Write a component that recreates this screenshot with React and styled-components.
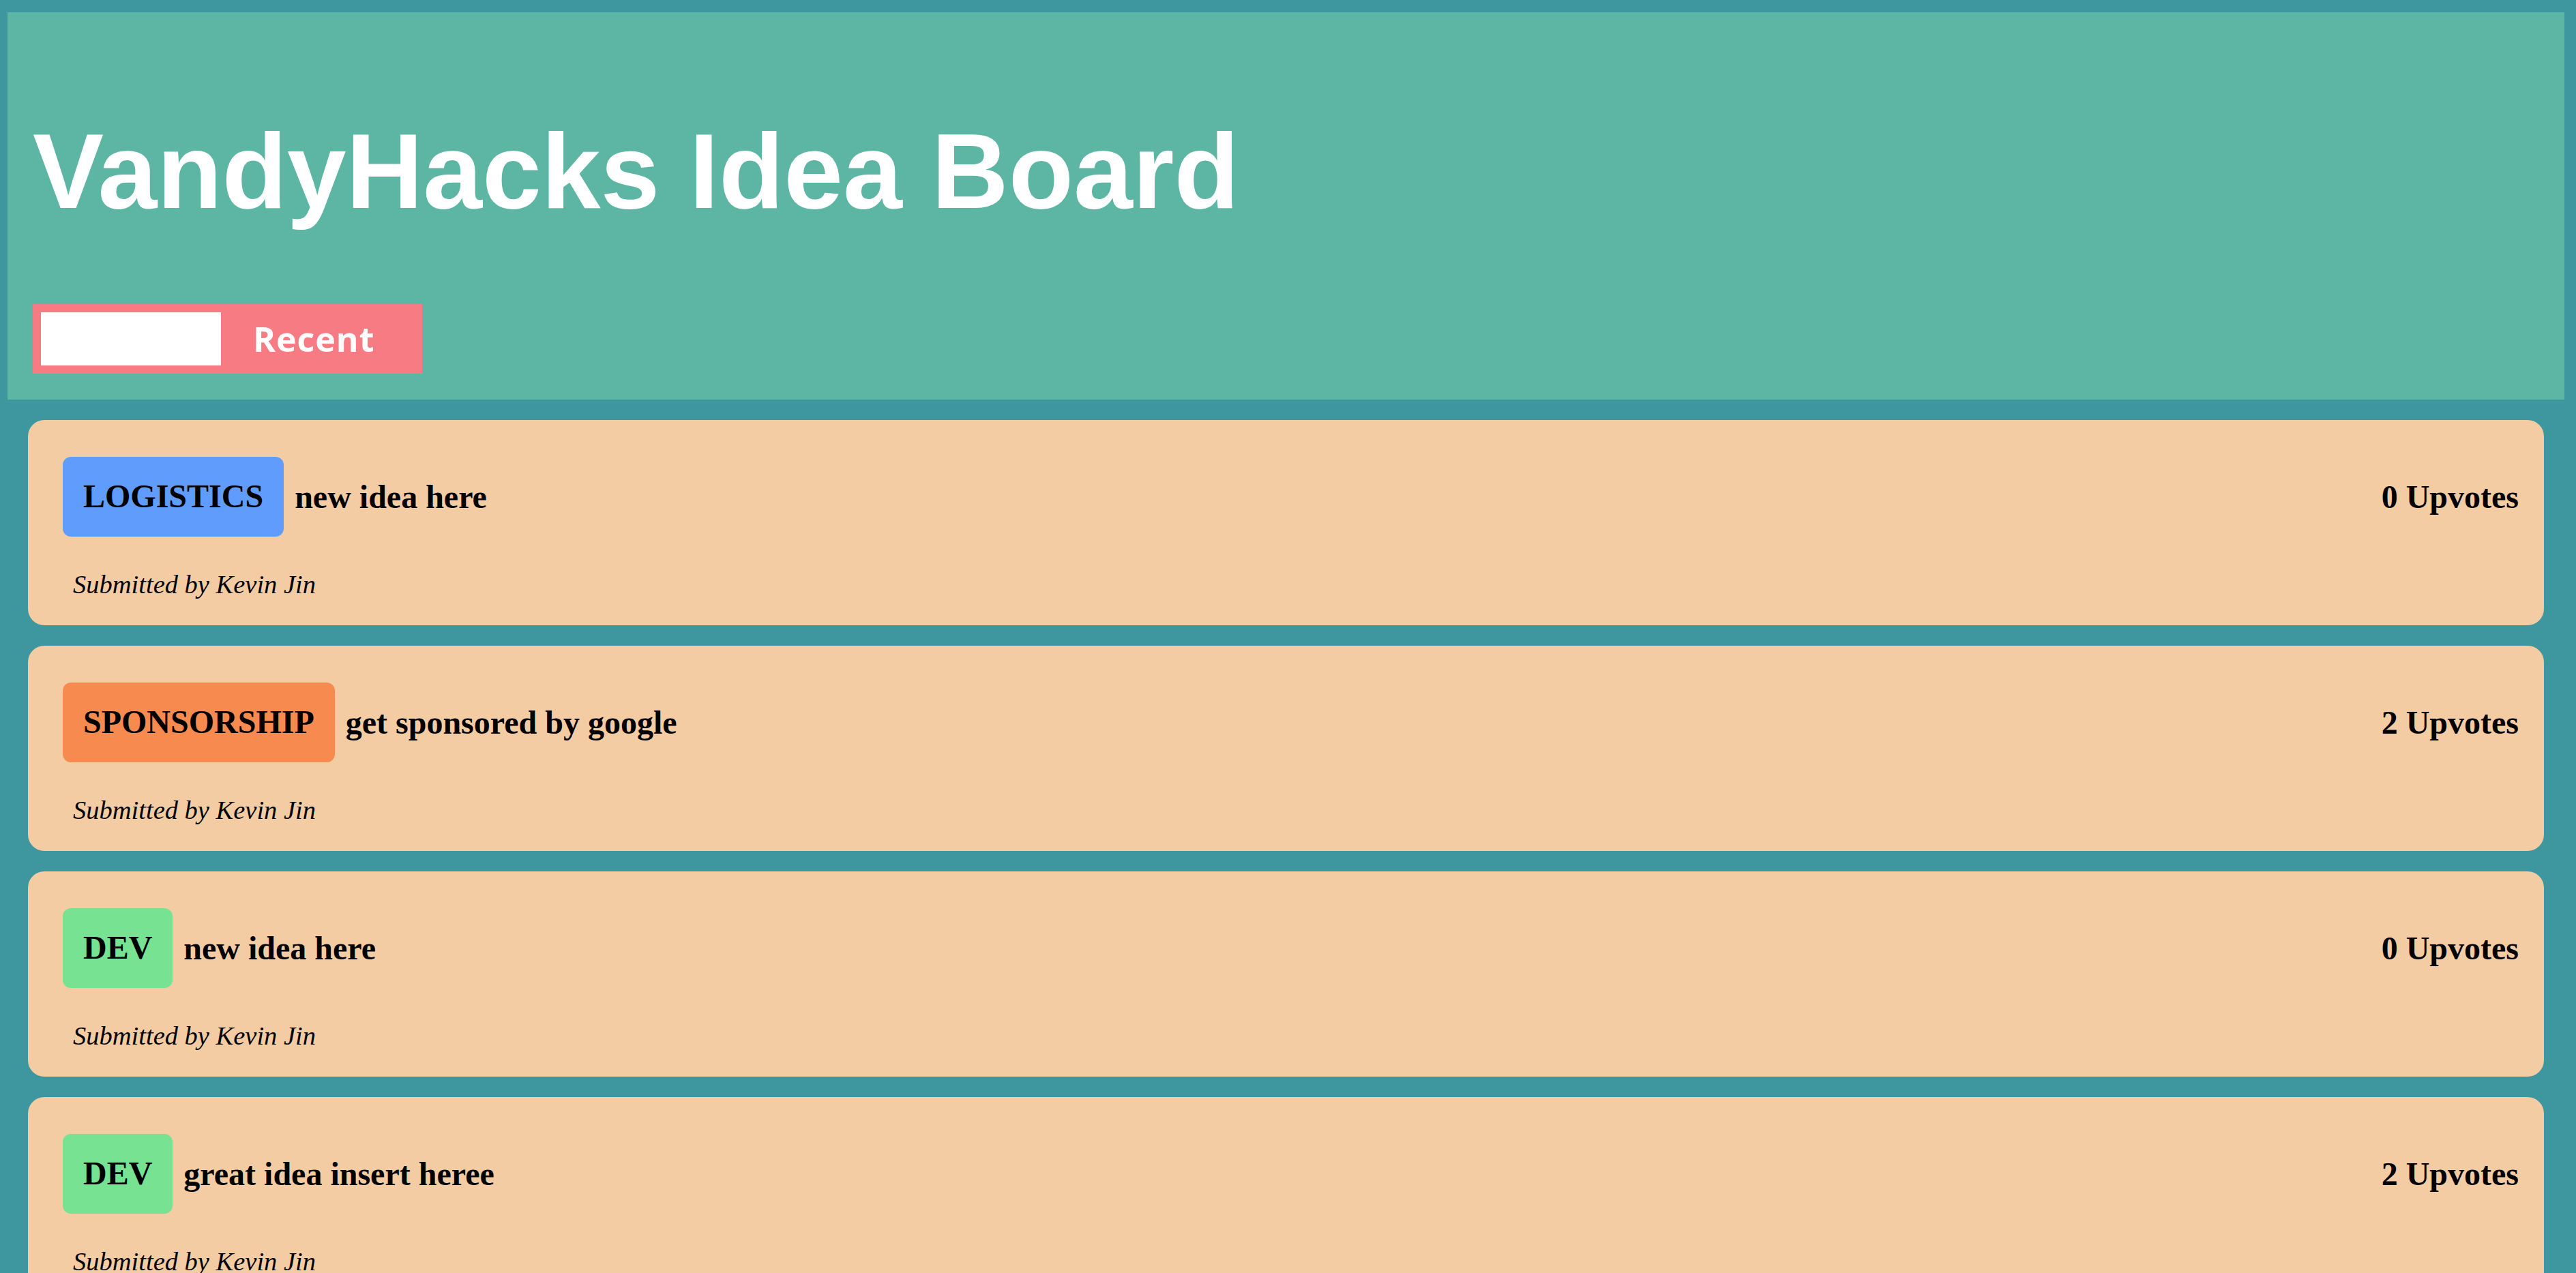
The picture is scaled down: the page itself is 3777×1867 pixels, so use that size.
import React from 'react';
import styled, { createGlobalStyle } from 'styled-components';

const GlobalStyle = createGlobalStyle`
  html, body {
    margin: 0;
    padding: 0;
    background: #3e979e;
  }
  body {
    font-family: "Liberation Serif", "Times New Roman", serif;
  }
`;

const Page = styled.div`
  padding: 18px 17px 40px 11px;
`;

const Header = styled.header`
  background: #5db5a4;
  padding: 40px 37px 38px;
`;

const Title = styled.h1`
  margin: 104px 0 106px;
  font-family: "Liberation Sans", Arial, sans-serif;
  font-weight: 700;
  font-size: 156px;
  line-height: 178px;
  color: #fff;
`;

const Controls = styled.div`
  display: inline-flex;
  align-items: center;
  background: #f67b83;
  padding: 12px 0 12px 12px;
`;

const SearchInput = styled.input`
  width: 264px;
  height: 78px;
  border: none;
  outline: none;
  padding: 0;
  background: #fff;
`;

const SortButton = styled.button`
  border: none;
  background: transparent;
  color: #fff;
  font-family: "Open Sans", "Noto Sans", sans-serif;
  font-weight: 700;
  font-size: 50px;
  letter-spacing: 1px;
  line-height: 78px;
  padding: 0 70px 0 47px;
  cursor: pointer;
`;

const List = styled.main`
  padding: 30px 30px 0;
  display: flex;
  flex-direction: column;
  gap: 30px;
`;

const Card = styled.article`
  background: #f4cca4;
  border-radius: 24px;
  padding: 54px 37px 38px 51px;
`;

const Row = styled.div`
  display: flex;
  align-items: center;
  justify-content: space-between;
`;

const Left = styled.div`
  display: flex;
  align-items: center;
`;

const Badge = styled.span`
  background: ${(p) => p.$color};
  border-radius: 12px;
  padding: 30px 30px 31px;
  font-size: 48px;
  line-height: 56px;
  font-weight: 700;
`;

const IdeaText = styled.span`
  margin-left: 16px;
  font-size: 48px;
  font-weight: 700;
`;

const Votes = styled.span`
  font-size: 48px;
  font-weight: 700;
`;

const Author = styled.p`
  margin: 48px 0 0 15px;
  font-size: 38.5px;
  line-height: 44px;
  font-style: italic;
`;

const tagColors = {
  LOGISTICS: '#609cfc',
  SPONSORSHIP: '#f78b4f',
  DEV: '#76e292',
};

const ideas = [
  { tag: 'LOGISTICS', text: 'new idea here', votes: 0 },
  { tag: 'SPONSORSHIP', text: 'get sponsored by google', votes: 2 },
  { tag: 'DEV', text: 'new idea here', votes: 0 },
  { tag: 'DEV', text: 'great idea insert heree', votes: 2 },
];

export default function App() {
  return (
    <>
      <GlobalStyle />
      <Page>
        <Header>
          <Title>VandyHacks Idea Board</Title>
          <Controls>
            <SearchInput type="text" />
            <SortButton>Recent</SortButton>
          </Controls>
        </Header>
        <List>
          {ideas.map((idea, i) => (
            <Card key={i}>
              <Row>
                <Left>
                  <Badge $color={tagColors[idea.tag]}>{idea.tag}</Badge>
                  <IdeaText>{idea.text}</IdeaText>
                </Left>
                <Votes>{idea.votes} Upvotes</Votes>
              </Row>
              <Author>Submitted by Kevin Jin</Author>
            </Card>
          ))}
        </List>
      </Page>
    </>
  );
}
